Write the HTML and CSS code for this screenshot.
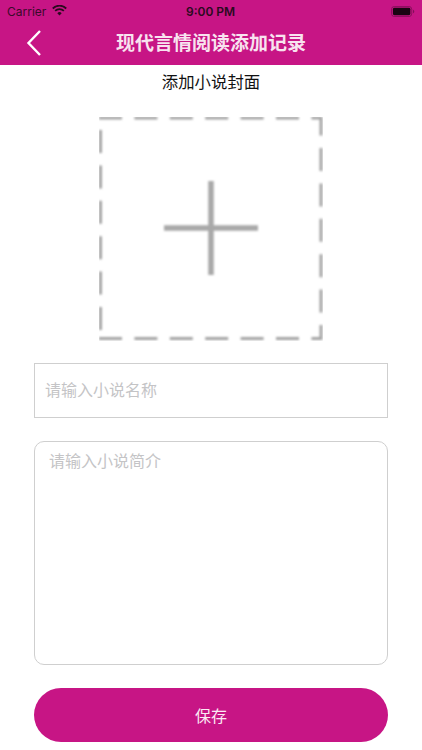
FILE: index.html
```html
<!DOCTYPE html>
<html lang="zh">
<head>
<meta charset="utf-8">
<title>现代言情阅读添加记录</title>
<link rel="stylesheet" href="styles.css">
</head>
<body>
<header class="header">
  <div class="status">
    <div class="status-left">
      <span class="carrier">Carrier</span>
      <svg class="wifi" width="15" height="11" viewBox="0 0 16 12"><path d="M8 11.500 5.600 8.900a3.400 3.400 0 0 1 4.800 0L8 11.500ZM3.900 7.200 2.600 5.800a7.600 7.600 0 0 1 10.800 0l-1.300 1.400a5.800 5.800 0 0 0-8.200 0ZM1.300 4.500 0 3.100a11.300 11.300 0 0 1 16 0l-1.300 1.400a9.500 9.500 0 0 0-13.400 0Z" fill="#2a0a1e"/></svg>
    </div>
    <span class="time">9:00 PM</span>
    <svg class="battery" width="24" height="11" viewBox="0 0 26 12"><rect x=".5" y=".5" width="22" height="11" rx="3" fill="none" stroke="#3a0a2a" stroke-opacity=".45"/><rect x="2" y="2" width="19" height="8" rx="1.600" fill="#1a0412"/><path d="M24 4v4c.8-.3 1.300-1.100 1.300-2S24.800 4.300 24 4Z" fill="#3a0a2a" fill-opacity=".5"/></svg>
  </div>
  <div class="nav">
    <svg class="back" width="16" height="28" viewBox="0 0 16 28"><path d="M14 2 2.500 14 14 26" fill="none" stroke="#fff" stroke-width="2.400"/></svg>
    <h1 class="title">现代言情阅读添加记录</h1>
  </div>
</header>
<main class="form">
  <p class="cover-label">添加小说封面</p>
  <svg class="cover" width="224" height="224" viewBox="0 0 224 224">
    <defs><filter id="soft" x="-5%" y="-5%" width="110%" height="110%"><feGaussianBlur stdDeviation="1"/></filter></defs>
    <g filter="url(#soft)" fill="none" stroke="#a4a4a4" stroke-width="3">
      <path d="M0 1H223M0 221.500H223" stroke-dasharray="23 12.400"/>
      <path d="M222 0V223" stroke-dasharray="23 12.400" stroke-dashoffset="4.400"/>
      <path d="M1.500 0V223" stroke-dasharray="23 12.400" stroke-dashoffset="-13"/>
      <path d="M112 64V158M65 111H159" stroke-width="5.500" stroke="#a8a8a8"/>
    </g>
  </svg>
  <input class="name-input" type="text" placeholder="请输入小说名称">
  <textarea class="intro-input" placeholder="请输入小说简介"></textarea>
  <button class="save" type="button">保存</button>
</main>
</body>
</html>
```
FILE: styles.css
```css
* { box-sizing: border-box; }
html, body { margin: 0; padding: 0; }
body {
  width: 422px;
  height: 750px;
  overflow: hidden;
  background: #fff;
  font-family: "Noto Sans CJK SC", "Liberation Sans", sans-serif;
}
.header {
  height: 65px;
  background: #c71585;
  color: #fff;
}
.status {
  height: 22px;
  padding: 1px 7px 0 7px;
  display: flex;
  align-items: center;
  justify-content: space-between;
  position: relative;
}
.status-left { display: flex; align-items: center; gap: 6px; }
.carrier {
  font: 12px "Inter", "Liberation Sans", sans-serif;
  color: #3a0a2a;
}
.time {
  position: absolute;
  left: 186px;
  font: 600 12px "Inter", "Liberation Sans", sans-serif;
  color: #2a0a1e;
}
.wifi { display: block; margin-top: -2px; }
.battery { display: block; }
.nav {
  height: 43px;
  display: flex;
  align-items: center;
  justify-content: center;
  position: relative;
}
.back { position: absolute; left: 26px; top: 7px; }
.title {
  margin: -4px 0 0;
  font-size: 19px;
  line-height: 28px;
  font-weight: 700;
  color: #f8e3ef;
}
.form {
  display: flex;
  flex-direction: column;
  align-items: center;
}
.cover-label {
  margin: 4px 0 0;
  height: 24px;
  font-size: 16.4px;
  line-height: 24px;
  color: #111;
}
.cover { display: block; margin-top: 24px; }
.name-input, .intro-input {
  display: block;
  width: 354px;
  border: 1px solid #cfcfcf;
  background: #fff;
  font: 16px "Noto Sans CJK SC", "Liberation Sans", sans-serif;
  color: #333;
  outline: none;
}
.name-input::placeholder, .intro-input::placeholder { color: #c4c4c6; opacity: 1; }
.name-input { height: 55px; margin-top: 22px; padding: 0 10px 3px; }
.intro-input {
  height: 224px;
  margin-top: 23px;
  padding: 6px 14px;
  border-radius: 10px;
  resize: none;
}
.save {
  width: 354px;
  height: 54px;
  margin-top: 23px;
  border: 0;
  border-radius: 27px;
  background: #c71585;
  color: #fbeaf4;
  font: 16px "Noto Sans CJK SC", "Liberation Sans", sans-serif;
}
```
